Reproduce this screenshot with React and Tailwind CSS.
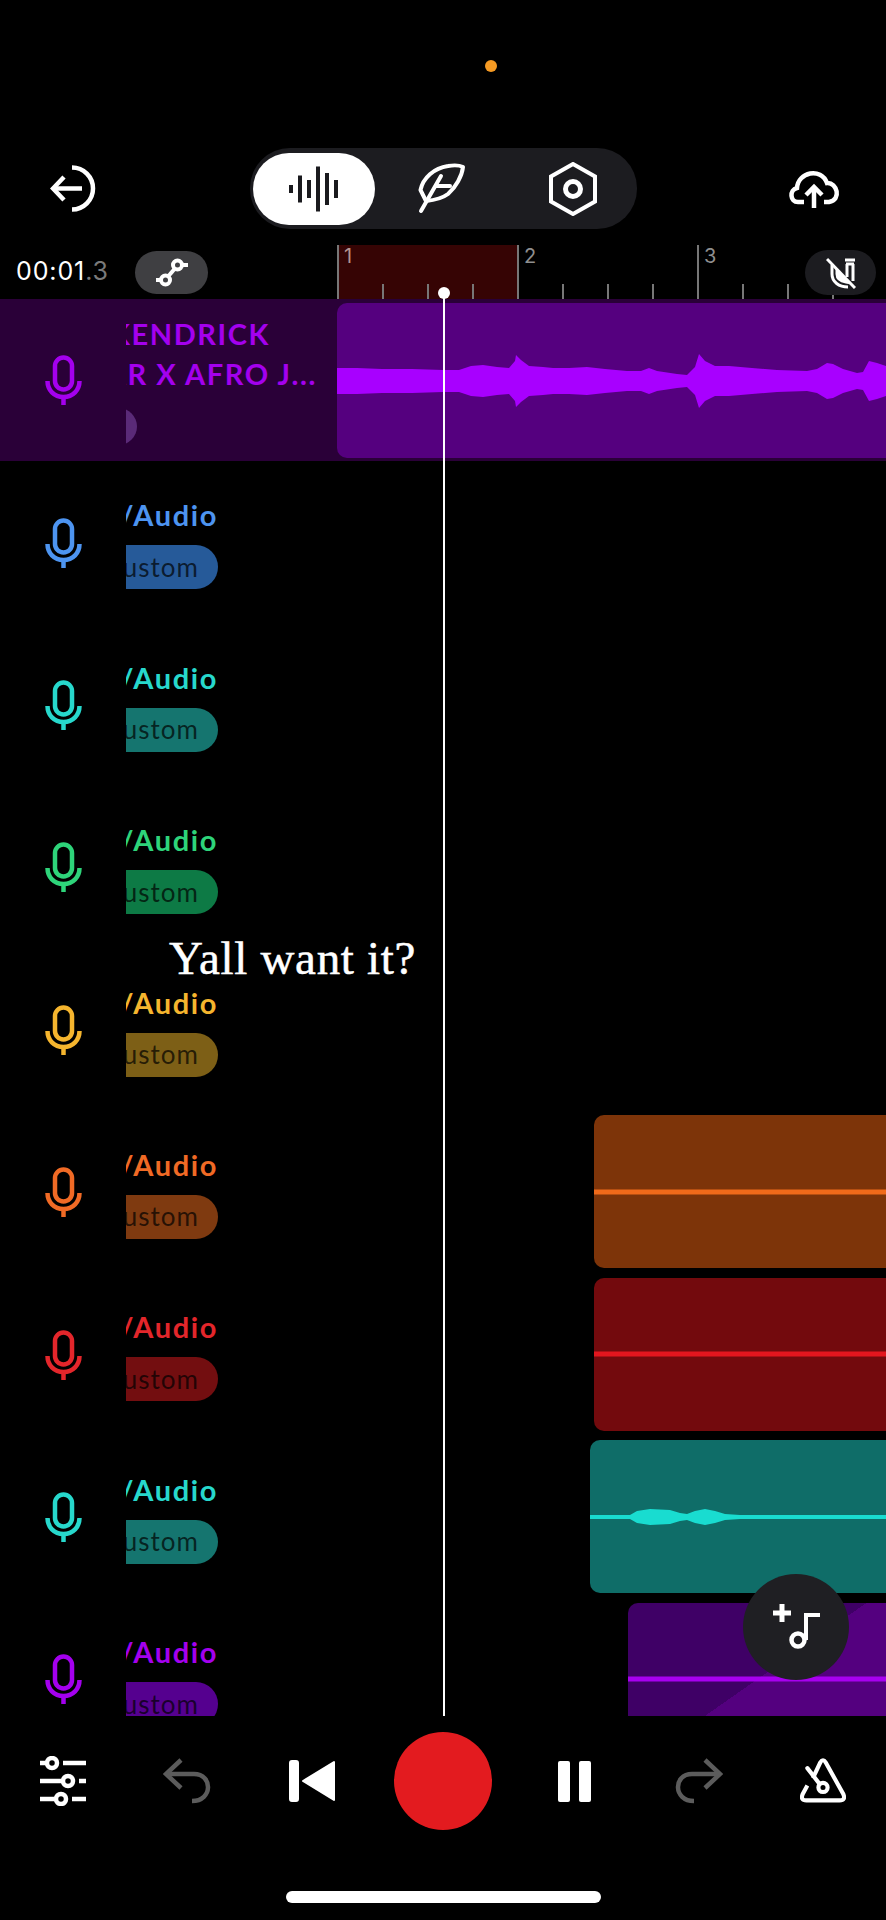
import React from "react";

const sans = "font-['Lato','Noto_Sans',sans-serif]";

const buildWave = (points, mid) => {
  const top = points.map(([x, h]) => `${x} ${mid - h}`);
  const bottom = [...points].reverse().map(([x, h]) => `${x} ${mid + h}`);
  return `M${top.join(" L")} L${bottom.join(" L")} Z`;
};

const flat = (h) => [
  [0, h],
  [300, h],
];

// clip coords: x = 106 + px / 3 of the zoomed crop
const envelope = [
  [0, 13], [20, 13], [45, 12], [75, 12], [106, 11], [122, 11], [134, 15], [146, 16], [160, 14],
  [172, 13], [178, 20], [179, 26], [184, 21], [192, 15], [206, 14], [216, 13], [232, 13], [250, 14],
  [268, 12], [290, 10], [304, 10], [312, 13], [320, 10], [340, 7], [350, 6], [358, 14], [362, 27],
  [368, 20], [378, 15], [392, 15], [415, 13], [440, 11], [470, 10], [480, 12], [490, 18], [496, 17],
  [506, 12], [520, 8], [526, 9], [532, 20], [540, 18], [549, 15],
];

const tealWave = [
  [0, 2], [40, 2], [47, 6], [60, 8], [80, 7], [90, 4], [97, 3], [105, 6], [115, 8], [125, 6],
  [135, 3], [150, 2], [300, 2],
];

const tracks = [
  { text: "text-[#4d94f0]", stroke: "#4d94f0", pill: "bg-[#265a99]" },
  { text: "text-[#27d8cc]", stroke: "#27d8cc", pill: "bg-[#15756f]" },
  { text: "text-[#2ed47a]", stroke: "#2ed47a", pill: "bg-[#0d7a45]" },
  { text: "text-[#f5b52e]", stroke: "#f5b52e", pill: "bg-[#7d5f16]" },
  {
    text: "text-[#f06a25]",
    stroke: "#f06a25",
    pill: "bg-[#7f3a10]",
    clip: "ml-[257px] bg-[#7d3409]",
    wave: "#f06a1a",
    points: flat(2.5),
  },
  {
    text: "text-[#e3262b]",
    stroke: "#e3262b",
    pill: "bg-[#730e10]",
    clip: "ml-[257px] bg-[#730a0d]",
    wave: "#e3161e",
    points: flat(2.5),
  },
  {
    text: "text-[#27d8cc]",
    stroke: "#27d8cc",
    pill: "bg-[#15756f]",
    clip: "ml-[253px] bg-[#0f6d68]",
    wave: "#19dcd0",
    points: tealWave,
  },
  {
    text: "text-[#a400ee]",
    stroke: "#a400ee",
    pill: "bg-[#55008f]",
    clip: "ml-[291px] bg-[linear-gradient(145deg,#3f0066_50%,#54007f_50%)]",
    wave: "#a800f0",
    points: flat(2.5),
  },
];

const Mic = ({ color }) => (
  <svg width="37" height="50" viewBox="0 0 37 50" fill="none" stroke={color} strokeWidth="4.5">
    <rect x="10" y="2.5" width="17" height="32" rx="8.5" />
    <path d="M2.5 26C2.5 35 9 42 18.5 42C28 42 34.5 35 34.5 26" />
    <path d="M18.5 42V50" />
  </svg>
);

const BackIcon = () => (
  <svg width="46" height="47" viewBox="0 0 46 47" fill="none" stroke="white" strokeWidth="4.5">
    <path d="M22 2.5A21 21 0 0 1 22 44.5" />
    <path d="M3 23.5H32" />
    <path d="M14 12L3 23.5L14 35" />
  </svg>
);

const BarsIcon = () => (
  <svg width="50" height="48" viewBox="0 0 50 48" fill="#1a1a1e">
    <rect x="0" y="20" width="4" height="8" />
    <rect x="9" y="10.5" width="4" height="27" />
    <rect x="18" y="15" width="4" height="18" />
    <rect x="27" y="1.5" width="4" height="45" />
    <rect x="36" y="8" width="4" height="32" />
    <rect x="45" y="15" width="4" height="18" />
  </svg>
);

const FeatherIcon = () => (
  <svg width="50" height="54" viewBox="20 23 50 54" fill="none" stroke="white" strokeWidth="4" strokeLinejoin="round" strokeLinecap="round">
    <path d="M23 72L43 37" />
    <path d="M28 62L22.5 51C25 39 36 29 50 27C56 26 61 26 65 28C64 37 58 48 50 55C46 58 38 61 28 62Z" />
    <path d="M38 47H52" />
  </svg>
);

const HexIcon = () => (
  <svg width="48" height="54" viewBox="0 0 48 54" fill="none" stroke="white" strokeWidth="4">
    <path d="M24 2L46 14.5V39.5L24 52L2 39.5V14.5Z" />
    <circle cx="24" cy="27" r="7.5" strokeWidth="5" />
  </svg>
);

const CloudIcon = () => (
  <svg width="54" height="46" viewBox="7 8 54 46" fill="none" stroke="white" strokeWidth="4.5">
    <path d="M23 42H17C9 42 8 30 16 28C17 12 40 7 46 23C56 22 61 40 48 42H43" />
    <path d="M33 48V27" />
    <path d="M25 35L33 27L41 35" />
  </svg>
);

const CurveIcon = () => (
  <svg width="40" height="30" viewBox="0 0 40 30" fill="none" stroke="white" strokeWidth="4">
    <circle cx="13.5" cy="23" r="4.5" />
    <circle cx="25.5" cy="8" r="4.5" />
    <path d="M4 23H9" />
    <path d="M16.5 19L22.5 12" />
    <path d="M30 8H36" />
  </svg>
);

const MagnetOffIcon = () => (
  <svg width="30" height="32" viewBox="0 0 30 32" fill="none" stroke="white" strokeWidth="3">
    <path d="M1 2L29 31" />
    <path d="M6 8V17C6 25 13 30 22 30" />
    <path d="M11 14V17C11 21 14 24 20 25Z" fill="white" />
    <path d="M19 3H29" />
    <path d="M20 7H28" />
    <path d="M21 7V20" />
    <path d="M27 7V24" />
  </svg>
);

const SlidersIcon = () => (
  <svg width="46" height="50" viewBox="0 0 46 50" fill="none" stroke="white" strokeWidth="4.5">
    <path d="M0 7H6M23 7H46" />
    <circle cx="12" cy="7" r="5" />
    <path d="M0 25H22M39 25H46" />
    <circle cx="28" cy="25" r="5" />
    <path d="M0 43H15M32 43H46" />
    <circle cx="21" cy="43" r="5" />
  </svg>
);

const UndoIcon = ({ flip }) => (
  <svg
    width="50"
    height="46"
    viewBox="0 0 50 46"
    fill="none"
    stroke="#5c5c5c"
    strokeWidth="4.5"
    className={flip ? "-scale-x-100" : ""}
  >
    <path d="M18 2L3 16L18 30" />
    <path d="M3 16H31C50 16 50 43 29 43" />
  </svg>
);

const SkipBackIcon = () => (
  <svg width="48" height="42" viewBox="0 0 48 42" fill="white" stroke="white" strokeLinejoin="round" strokeWidth="2">
    <rect x="2" y="1" width="8" height="40" rx="2" />
    <path d="M15 21L46 2V40Z" />
  </svg>
);

const PauseIcon = () => (
  <div className="flex gap-[9px]">
    <div className="w-[12px] h-[41px] bg-white rounded-[2px]" />
    <div className="w-[12px] h-[41px] bg-white rounded-[2px]" />
  </div>
);

const MetronomeIcon = () => (
  <svg width="46" height="46" viewBox="0 0 50 50" fill="none" stroke="white" strokeWidth="4.5">
    <path d="M14 22L22 5Q25 0 28 5L47 39Q50 46 43 46H7Q0 46 3 39L8 30" />
    <path d="M8 11L25 33" strokeLinecap="round" />
    <circle cx="25" cy="32" r="5" fill="black" />
  </svg>
);

const AddNoteIcon = () => (
  <svg width="50" height="50" viewBox="0 0 50 50" fill="none" stroke="white">
    <path d="M11 2V20M2 11H20" strokeWidth="5" />
    <path d="M35 13H49M35 11V38" strokeWidth="4" />
    <circle cx="27" cy="38" r="6.5" strokeWidth="4.5" />
  </svg>
);

const Wave = ({ points, color, width }) => (
  <svg width={width} height="60" viewBox={`0 0 ${width} 60`} className="shrink-0">
    <path d={buildWave(points, 30)} fill={color} />
  </svg>
);

const Ruler = () => {
  const cell = (i, numberColor) => {
    if (i % 4 === 0) {
      return (
        <div
          key={i}
          className={`w-[45px] h-full shrink-0 border-l-2 border-[#777777] pl-[5px] pt-[1px] text-[20px] leading-[20px] font-['Inter',sans-serif] ${numberColor}`}
        >
          {i / 4 + 1}
        </div>
      );
    }
    return (
      <div key={i} className="w-[45px] h-full shrink-0 flex items-end">
        <div className="w-[2px] h-[15px] bg-[#777777]" />
      </div>
    );
  };

  return (
    <div className="flex-1 flex overflow-hidden">
      <div className="flex shrink-0 bg-[#360404]">{[0, 1, 2, 3].map((i) => cell(i, "text-[#b59490]"))}</div>
      {[4, 5, 6, 7, 8, 9, 10, 11].map((i) => cell(i, "text-[#8f8f8f]"))}
    </div>
  );
};

const TrackRow = ({ track }) => (
  <div className="flex h-[162.4px] shrink-0">
    <div className="w-[337px] shrink-0 flex">
      <div className="ml-[45px] w-[37px] shrink-0 flex items-center">
        <Mic color={track.stroke} />
      </div>
      <div className="ml-[44px] w-[92px] shrink-0 pt-[36px]">
        <div className={`flex justify-end overflow-hidden h-[36px] text-[29px] leading-[36px] tracking-[1.6px] font-bold whitespace-nowrap ${sans} ${track.text}`}>
          <span className="shrink-0">/Audio</span>
        </div>
        <div className={`flex justify-end items-center overflow-hidden mt-[12px] h-[44px] pr-[19px] rounded-r-[22px] ${track.pill}`}>
          <span className={`shrink-0 text-[26px] tracking-[1px] whitespace-nowrap text-black/70 ${sans}`}>Custom</span>
        </div>
      </div>
    </div>
    {track.clip && (
      <div className={`flex-1 h-[153px] mt-[4.5px] flex items-center overflow-hidden rounded-l-[10px] ${track.clip}`}>
        <Wave points={track.points} color={track.wave} width={300} />
      </div>
    )}
  </div>
);

const App = () => {
  return (
    <div className="relative w-[886px] h-[1920px] bg-black overflow-hidden flex flex-col">
      <div className="h-[148px] shrink-0 pt-[60px] pl-[485px]">
        <div className="w-[12px] h-[12px] rounded-full bg-[#f59a23]" />
      </div>

      <div className="h-[81px] shrink-0 flex items-center">
        <div className="ml-[50px]">
          <BackIcon />
        </div>
        <div className="ml-[154px] w-[387px] h-full flex items-center rounded-[40px] bg-[#1c1c20]">
          <div className="ml-[3px] w-[122px] h-[72px] flex items-center justify-center rounded-[36px] bg-white">
            <BarsIcon />
          </div>
          <div className="w-[136px] flex justify-center">
            <FeatherIcon />
          </div>
          <div className="w-[124px] flex justify-center">
            <HexIcon />
          </div>
        </div>
        <div className="ml-[151px] mt-[4px]">
          <CloudIcon />
        </div>
      </div>

      <div className="relative mt-[16px] h-[54px] shrink-0 flex">
        <div className="w-[337px] shrink-0 flex items-center">
          <div className="ml-[16px] w-[119px] text-[25px] tracking-[0.9px] text-white font-['Inter',sans-serif]">
            00:01<span className="text-[#7a7a7a]">.3</span>
          </div>
          <div className="w-[73px] h-[43px] flex items-center justify-center rounded-[22px] bg-[#3f3f42]">
            <CurveIcon />
          </div>
        </div>
        <Ruler />
        <div className="absolute right-[10px] top-[5px] w-[71px] h-[45px] flex items-center justify-center rounded-[23px] bg-[#1c1c20]">
          <MagnetOffIcon />
        </div>
      </div>

      <div className="h-[1417px] shrink-0 overflow-hidden">
        <div className="flex h-[162.4px] bg-[#2a0038]">
          <div className="w-[337px] shrink-0 flex">
            <div className="ml-[45px] w-[37px] shrink-0 flex items-center">
              <Mic color="#a400ee" />
            </div>
            <div className="ml-[44px] flex-1 pt-[15px] overflow-hidden">
              <div className={`flex justify-end pr-[67px] text-[29px] leading-[40px] tracking-[1.6px] font-bold whitespace-nowrap text-[#a400ee] ${sans}`}>
                <span className="shrink-0">KENDRICK</span>
              </div>
              <div className={`flex justify-end pr-[20px] text-[29px] leading-[40px] tracking-[1.6px] font-bold whitespace-nowrap text-[#a400ee] ${sans}`}>
                <span className="shrink-0">LAMAR X AFRO J...</span>
              </div>
              <div className="mt-[14px] w-[11px] h-[37px] overflow-hidden">
                <div className="-ml-[26px] w-[37px] h-[37px] rounded-full bg-[#5a2a78]" />
              </div>
            </div>
          </div>
          <div className="flex-1 h-[155px] mt-[4px] flex items-center overflow-hidden rounded-l-[10px] bg-[#55007f]">
            <Wave points={envelope} color="#a800ff" width={549} />
          </div>
        </div>
        {tracks.map((track, index) => (
          <TrackRow key={index} track={track} />
        ))}
      </div>

      <div className="flex-1">
        <div className="pt-[16px] grid grid-cols-[126px_124px_124px_138px_124px_124px_126px] items-center justify-items-center">
          <SlidersIcon />
          <UndoIcon />
          <SkipBackIcon />
          <div className="w-[98px] h-[98px] rounded-full bg-[#e31b1f]" />
          <PauseIcon />
          <UndoIcon flip />
          <MetronomeIcon />
        </div>
        <div className="mt-[61px] mx-auto w-[315px] h-[12px] rounded-full bg-white" />
      </div>

      {/* playhead */}
      <div className="absolute left-[443px] top-[293px] w-[2px] h-[1423px] bg-white" />
      <div className="absolute left-[438px] top-[287px] w-[12px] h-[12px] rounded-full bg-white" />

      <div className="absolute left-[169px] top-[930px] text-[47px] leading-[56px] tracking-[0.7px] text-white whitespace-nowrap [-webkit-text-stroke:0.5px_white] font-['Liberation_Serif',serif]">
        Yall want it?
      </div>

      <div className="absolute left-[743px] top-[1574px] w-[106px] h-[106px] flex items-center justify-center rounded-full bg-[#1f1f23]">
        <AddNoteIcon />
      </div>
    </div>
  );
};

export default App;
